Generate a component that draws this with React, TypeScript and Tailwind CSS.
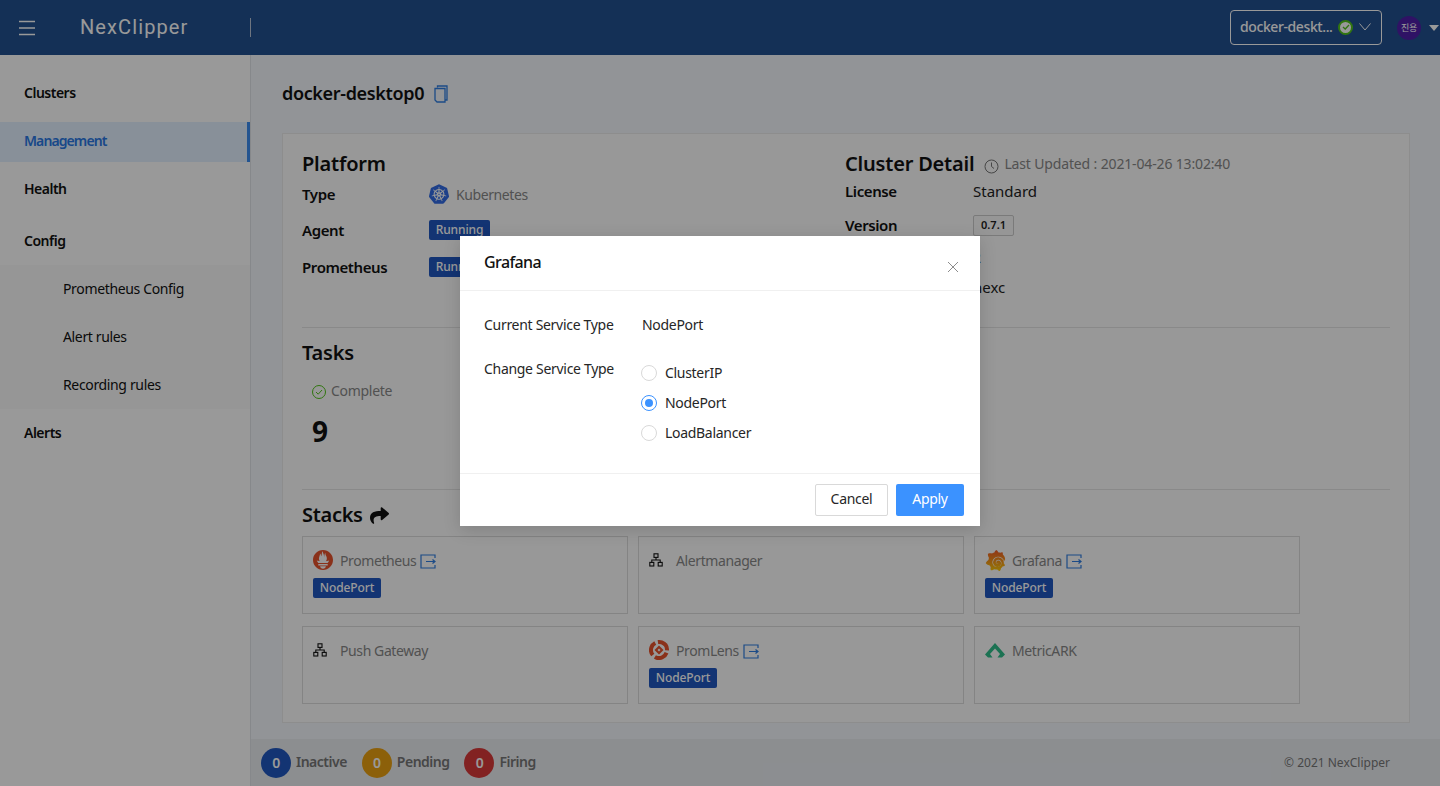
import React from "react";
import { SiKubernetes, SiPrometheus } from "react-icons/si";
import { FaShare } from "react-icons/fa";

const Cluster = () => (
  <svg width="14" height="14" viewBox="0 0 14 14" fill="none" stroke="#111" strokeWidth="1.1">
    <rect x="5" y="0.8" width="4" height="3.6" />
    <rect x="0.8" y="9.4" width="4" height="3.6" />
    <rect x="9.2" y="9.4" width="4" height="3.6" />
    <path d="M7 4.4V7M2.8 9.4V7H11.2V9.4" />
  </svg>
);

const LinkOut = () => (
  <svg width="16" height="15" viewBox="0 0 16 15" fill="none" stroke="#2f7de1" strokeWidth="1.2" className="ml-[4px] mt-[2px] shrink-0">
    <path d="M15 4V1H1V14H15V11" />
    <path d="M6 7.5H15M12.5 5.5L15 7.5L12.5 9.5" />
  </svg>
);

const grafanaPath = "M23.02 10.59a8.578 8.578 0 0 0-.862-3.034 8.911 8.911 0 0 0-1.789-2.445c.337-1.342-.413-2.505-.413-2.505-1.292-.08-2.113.4-2.416.62-.052-.02-.102-.044-.154-.064-.22-.089-.446-.172-.677-.247-.231-.073-.47-.14-.711-.197a9.867 9.867 0 0 0-.875-.161C14.557.753 12.94 0 12.94 0c-1.804 1.145-2.147 2.744-2.147 2.744l-.018.093c-.098.029-.2.057-.298.088-.138.042-.275.094-.413.143-.138.055-.275.107-.41.166a8.869 8.869 0 0 0-1.557.87l-.063-.029c-2.497-.955-4.716.195-4.716.195-.203 2.658.996 4.33 1.235 4.636a11.608 11.608 0 0 0-.607 2.635C1.636 12.677.953 15.014.953 15.014c1.926 2.214 4.171 2.351 4.171 2.351.003-.002.006-.004.006-.006.285.509.615.994.986 1.446.156.19.32.371.488.548-.704 2.009.099 3.68.099 3.68 2.144.08 3.553-.937 3.849-1.173a9.784 9.784 0 0 0 3.164.501h.08l.055-.003.107-.002.103-.005.003.002c1.01 1.44 2.788 1.646 2.788 1.646 1.264-1.332 1.337-2.653 1.337-2.94v-.058c0-.02-.003-.039-.003-.06.265-.187.52-.387.758-.6a7.875 7.875 0 0 0 1.415-1.7c1.43.083 2.437-.885 2.437-.885-.236-1.49-1.085-2.216-1.264-2.354l-.018-.013-.016-.013a.217.217 0 0 1-.031-.02c.008-.092.016-.18.02-.27.011-.162.016-.323.016-.48v-.253l-.005-.098-.008-.135a1.891 1.891 0 0 0-.01-.13c-.003-.042-.008-.083-.013-.125l-.016-.124-.018-.122a6.215 6.215 0 0 0-2.032-3.73 6.015 6.015 0 0 0-3.222-1.46 6.292 6.292 0 0 0-.85-.048l-.107.002h-.063l-.11.007-.124.009c-.04.002-.07.007-.115.013a6.12 6.12 0 0 0-2.64.803 5.956 5.956 0 0 0-1.95 1.806 5.794 5.794 0 0 0-.964 2.374 5.46 5.46 0 0 0-.068.843l.003.153.005.1c.005.157.022.32.037.474a5.102 5.102 0 0 0 1.65 3.15 4.945 4.945 0 0 0 2.67 1.197c.251.028.502.034.74.026l.122-.005.078-.005c.042-.003.084-.005.121-.01l.158-.016.103-.013.102-.018a4.207 4.207 0 0 0 2.34-1.274 3.995 3.995 0 0 0 1.06-2.348c.01-.076.013-.153.018-.228l.003-.06.002-.06.002-.136c0-.047-.002-.098-.005-.148a1.996 1.996 0 0 0-.016-.184 3.34 3.34 0 0 0-1.065-2.064 3.194 3.194 0 0 0-1.84-.81l-.126-.012c-.025 0-.05-.002-.075-.002h-.08l-.09.002c-.04 0-.08.005-.12.008a2.48 2.48 0 0 0-1.22.46 2.29 2.29 0 0 0-.836 1.18 1.62 1.62 0 0 0 .075 1.18c.078.157.176.296.3.41.115.11.255.2.405.254.08.03.16.05.24.062.04.005.08.008.12.01h.154c.022 0 .042-.003.062-.005.02-.003.04-.005.06-.01a.97.97 0 0 0 .44-.2.8.8 0 0 0 .28-.44.66.66 0 0 0-.02-.47.47.47 0 0 0-.34-.24.42.42 0 0 1 .4.24.74.74 0 0 1 .07.52.86.86 0 0 1-.3.48c-.3.25-.73.34-1.12.25a1.55 1.55 0 0 1-.68-.32 1.97 1.97 0 0 1-.51-.62 2.23 2.23 0 0 1-.14-1.64 2.72 2.72 0 0 1 1-1.4 2.93 2.93 0 0 1 1.47-.55c.04-.003.09-.006.14-.008l.1-.003h.1c.04 0 .07.003.1.005a3.7 3.7 0 0 1 2.19.94 3.84 3.84 0 0 1 1.23 2.39c.01.07.02.15.02.22l.01.17v.15l-.003.08-.003.07c-.01.09-.01.18-.02.27a4.5 4.5 0 0 1-1.2 2.65 4.72 4.72 0 0 1-2.63 1.44l-.12.02-.12.02-.17.02c-.05.005-.1.008-.15.01l-.09.01-.13.004c-.27.01-.55 0-.83-.03a5.47 5.47 0 0 1-2.95-1.32 5.62 5.62 0 0 1-1.82-3.47c-.02-.17-.04-.35-.04-.52l-.006-.11-.003-.17c0-.31.03-.62.08-.93a6.32 6.32 0 0 1 1.05-2.58 6.47 6.47 0 0 1 2.12-1.96 6.63 6.63 0 0 1 2.87-.87l.13-.01.14-.01.07-.003h.11c.32-.01.63 0 .93.05a6.53 6.53 0 0 1 3.5 1.59 6.73 6.73 0 0 1 2.2 4.04z";

const Prom = () => <SiPrometheus size={20} color="#e6522c" />;
const Grafana = () => (
  <svg width="21" height="21" viewBox="0 0 24 24">
    <defs>
      <linearGradient id="gf" x1="0" y1="0" x2="0" y2="1">
        <stop offset="0" stopColor="#f05a28" />
        <stop offset="1" stopColor="#fbca0a" />
      </linearGradient>
    </defs>
    <path fill="url(#gf)" d={grafanaPath} />
  </svg>
);

const PromLens = () => (
  <svg width="20" height="20" viewBox="0 0 20 20">
    <circle cx="10" cy="10" r="8" fill="none" stroke="#e6522c" strokeWidth="4" strokeDasharray="14 2.8" transform="rotate(20 10 10)" />
    <path fillRule="evenodd" d="M10 5.5L14.5 10L10 14.5L5.5 10ZM10 8.5L8.5 10L10 11.5L11.5 10Z" fill="#e6522c" />
  </svg>
);

const Ark = () => (
  <svg width="20" height="16" viewBox="0 0 20 16">
    <path d="M10 1L20 12.5L17 15.5H12.5L15 12L10 6.5L5 12L7.5 15.5H3L0 12.5Z" fill="#2fbf8a" />
  </svg>
);

const Tag = ({ children, className = "" }: { children: React.ReactNode; className?: string }) => (
  <span className={`inline-flex items-center justify-center h-[20px] rounded-[2px] bg-[#2058c0] text-white text-[12px] font-medium tracking-[-0.1px] ${className}`}>{children}</span>
);

const StackCard = ({ icon, name, link, tag }: { icon: React.ReactNode; name: string; link?: boolean; tag?: boolean }) => (
  <div className="h-[78px] border border-[#ddd] px-[10px] pt-[13px]">
    <div className="flex items-center h-[20px]">
      <span className="w-[27px] flex items-center shrink-0">{icon}</span>
      <span className="text-[14px] text-[#888] tracking-[-0.4px]">{name}</span>
      {link && <LinkOut />}
    </div>
    {tag && <Tag className="w-[68px] mt-[8px]">NodePort</Tag>}
  </div>
);

const Row = ({ label, children, h, w = "w-[127px]" }: { label: string; children: React.ReactNode; h: string; w?: string }) => (
  <div className={`flex items-center ${h}`}>
    <span className={`${w} text-[15px] font-semibold text-[#111] shrink-0 tracking-[-0.4px]`}>{label}</span>
    {children}
  </div>
);

const Radio = ({ label, checked }: { label: string; checked?: boolean }) => (
  <div className="flex items-center h-[30px]">
    <span className={`w-[16px] h-[16px] rounded-full border bg-white flex items-center justify-center ${checked ? "border-[#3b92ff]" : "border-[#d9d9d9]"}`}>
      {checked && <span className="w-[8px] h-[8px] rounded-full bg-[#3b92ff]" />}
    </span>
    <span className="ml-[8px] text-[14px] text-[#262626] pb-[1px]">{label}</span>
  </div>
);

const Count = ({ color, label, ml }: { color: string; label: string; ml: string }) => (
  <div className={`flex items-center ${ml}`}>
    <span className={`w-[30px] h-[30px] rounded-full ${color} text-white text-[14px] font-semibold flex items-center justify-center pb-[1px]`}>0</span>
    <span className="ml-[5px] pb-[3px] text-[14px] font-semibold text-[#777] tracking-[-0.5px]">{label}</span>
  </div>
);

export default function App() {
  return (
    <div className="relative w-[1440px] h-[786px] overflow-hidden bg-[#f3f7fc] font-['Noto_Sans',sans-serif] tracking-[-0.3px] flex flex-col">
      <header className="h-[55px] shrink-0 bg-[#22508f] flex items-center">
        <svg width="18" height="16" viewBox="0 0 18 16" className="ml-[18px]" stroke="#fff" strokeWidth="1.5">
          <path d="M1 1.5H17M1 8H17M1 14.5H17" />
        </svg>
        <span className="ml-[44px] w-[170px] text-[20px] font-normal tracking-[1.1px] text-white font-['Roboto',sans-serif] pb-[1px]">NexClipper</span>
        <span className="w-px h-[19px] bg-[#b8c4d6]" />
        <div className="ml-auto w-[152px] h-[35px] mt-[-1px] rounded-[4px] border border-white flex items-center pl-[9px]">
          <span className="text-[14px] text-white font-medium tracking-[-0.4px] w-[95px] pb-[1px]">docker-deskt...</span>
          <span className="ml-[3px] w-[15px] h-[15px] rounded-full bg-white border-2 border-[#52c41a] flex items-center justify-center">
            <svg width="8" height="8" viewBox="0 0 8 8" fill="none" stroke="#52c41a" strokeWidth="1.3"><path d="M1 4L3.2 6L7 2" /></svg>
          </span>
          <svg width="12" height="8" viewBox="0 0 12 8" className="ml-[6px]" fill="none" stroke="#fff"><path d="M0.5 0.5L6 7L11.5 0.5" /></svg>
        </div>
        <span className="ml-[15px] w-[24px] h-[24px] rounded-full bg-[#4f1fa8] text-[9px] text-white flex items-center justify-center font-['Noto_Sans_CJK_KR',sans-serif]">진용</span>
        <svg width="10" height="6" viewBox="0 0 10 6" className="ml-[8px] mr-[1px]"><path d="M0 0H10L5 6Z" fill="#fff" /></svg>
      </header>
      <div className="flex flex-1 min-h-0">
        <aside className="w-[251px] shrink-0 bg-white border-r border-[#dfe3e8] pt-[18px] text-[14px] font-semibold text-[#111] tracking-[-0.5px]">
          <div className="h-[40px] pl-[24px] pb-[2px] flex items-center">Clusters</div>
          <div className="mt-[9px] h-[40px] pl-[24px] pb-[3px] flex items-center bg-[#e3f0ff] border-r-[3px] border-[#3b8cf0] text-[#2a78e4] tracking-[-0.9px]">Management</div>
          <div className="mt-[7px] h-[40px] pl-[24px] pb-[2px] flex items-center">Health</div>
          <div className="mt-[12px] h-[40px] pl-[24px] pb-[2px] flex items-center">Config</div>
          <div className="mt-[4px] bg-[#fafafa] h-[144px] font-normal text-[14px] tracking-[-0.35px]">
            <div className="h-[48px] pl-[63px] pb-[2px] flex items-center">Prometheus Config</div>
            <div className="h-[48px] pl-[63px] pb-[2px] flex items-center">Alert rules</div>
            <div className="h-[48px] pl-[63px] pb-[2px] flex items-center">Recording rules</div>
          </div>
          <div className="mt-[4px] h-[40px] pl-[24px] pb-[2px] flex items-center">Alerts</div>
        </aside>
        <main className="flex-1 min-w-0 flex flex-col">
          <div className="flex-1 pl-[31px] pr-[30px]">
            <div className="h-[78px] flex items-center pb-[1px]">
              <span className="text-[18px] font-semibold text-[#111] tracking-[-0.35px]">docker-desktop0</span>
              <svg width="14" height="18" viewBox="0 0 14 18" className="ml-[10px] mt-[1px]" fill="none" stroke="#2f7de1" strokeWidth="1.3">
                <path d="M3.5 2.5V1H13V15H11" />
                <path d="M1 3.5H11V17H3L1 15Z" />
              </svg>
            </div>
            <section className="h-[590px] bg-[#fdfdfd] border border-[#ebebeb] px-[19px] pt-[16px]">
              <div className="flex h-[178px] border-b border-[#e4e4e4]">
                <div className="w-[543px]">
                  <div className="h-[28px] text-[20px] leading-[28px] font-semibold text-[#111] tracking-[-0.2px]">Platform</div>
                  <Row label="Type" h="h-[36px] mt-[-2px]">
                    <SiKubernetes size={20} color="#326ce5" />
                    <span className="ml-[7px] text-[14px] text-[#888] tracking-[-0.4px]">Kubernetes</span>
                  </Row>
                  <Row label="Agent" h="h-[36px]"><Tag className="w-[61px]">Running</Tag></Row>
                  <Row label="Prometheus" h="h-[38px]"><Tag className="w-[61px]">Running</Tag></Row>
                </div>
                <div className="flex-1">
                  <div className="h-[28px] flex items-center">
                    <span className="text-[20px] font-semibold text-[#111] tracking-[-0.2px]">Cluster Detail</span>
                    <svg width="15" height="15" viewBox="0 0 15 15" className="ml-[10px] mt-[4px]" fill="none" stroke="#777"><circle cx="7.5" cy="7.5" r="6.5" /><path d="M7.5 3.5V7.5L10 9.5" /></svg>
                    <span className="ml-[5px] text-[14px] text-[#888] tracking-[-0.15px] pb-[1px]">Last Updated : 2021-04-26 13:02:40</span>
                  </div>
                  <Row label="License" w="w-[128px]" h="h-[28px] mt-[-1px]"><span className="text-[15px] text-[#222] tracking-normal">Standard</span></Row>
                  <Row label="Version" w="w-[128px]" h="h-[40px]">
                    <span className="h-[21px] w-[41px] border border-[#ccc] rounded-[2px] bg-[#fafafa] text-[11px] font-semibold text-[#222] tracking-normal flex items-center justify-center">0.7.1</span>
                  </Row>
                  <Row label="Node" w="w-[128px]" h="h-[24px]"><span className="text-[14px] text-[#222]">2</span></Row>
                  <Row label="Owner" w="w-[128px]" h="h-[36px]"><span className="text-[15px] text-[#222] tracking-normal">nexc</span></Row>
                </div>
              </div>
              <div className="h-[162px] border-b border-[#e4e4e4] pt-[11px]">
                <div className="text-[20px] leading-[28px] font-semibold text-[#111] tracking-[-0.2px]">Tasks</div>
                <div className="ml-[10px] mt-[13px] flex items-center h-[20px]">
                  <svg width="14" height="14" viewBox="0 0 14 14" fill="none" stroke="#52c41a" className="mt-[4px]"><circle cx="7" cy="7" r="6.5" /><path d="M4 7L6.2 9.2L10 5" /></svg>
                  <span className="ml-[5px] text-[14px] text-[#888]">Complete</span>
                </div>
                <div className="ml-[10px] mt-[11px] text-[28px] leading-[40px] font-bold text-[#111]">9</div>
              </div>
              <div className="flex items-center h-[46px] pt-[4px]">
                <span className="text-[20px] font-semibold text-[#111]">Stacks</span>
                <FaShare size={19} color="#111" className="ml-[7px]" />
              </div>
              <div className="grid grid-cols-[326px_326px_326px] gap-x-[10px] gap-y-[12px]">
                <StackCard icon={<Prom />} name="Prometheus" link tag />
                <StackCard icon={<Cluster />} name="Alertmanager" />
                <StackCard icon={<Grafana />} name="Grafana" link tag />
                <StackCard icon={<Cluster />} name="Push Gateway" />
                <StackCard icon={<PromLens />} name="PromLens" link tag />
                <StackCard icon={<Ark />} name="MetricARK" />
              </div>
            </section>
          </div>
          <footer className="h-[47px] shrink-0 bg-[#eaedf1] flex items-center pl-[10px] pr-[50px]">
            <Count color="bg-[#2058c0]" label="Inactive" ml="" />
            <Count color="bg-[#eaa012]" label="Pending" ml="ml-[15px]" />
            <Count color="bg-[#d93a3a]" label="Firing" ml="ml-[15px]" />
            <span className="ml-auto text-[12px] text-[#777] tracking-normal">© 2021 NexClipper</span>
          </footer>
        </main>
      </div>
      <div className="absolute inset-0 bg-black/40 flex justify-center pt-[236px]">
        <div className="w-[520px] h-[290px] bg-white shadow-[0_4px_16px_rgba(0,0,0,0.15)] flex flex-col">
          <div className="h-[55px] border-b border-[#f0f0f0] pl-[24px] pr-[21px] flex justify-between shrink-0">
            <span className="text-[16px] font-medium text-[#111] mt-[14px] tracking-[-0.6px]">Grafana</span>
            <svg width="12" height="12" viewBox="0 0 12 12" className="mt-[25px]" stroke="#8c8c8c" fill="none"><path d="M1 1L11 11M11 1L1 11" /></svg>
          </div>
          <div className="flex-1 pl-[24px] pt-[23px] text-[14px] text-[#262626]">
            <div className="flex">
              <span className="w-[158px]">Current Service Type</span>
              <span>NodePort</span>
            </div>
            <div className="flex mt-[23px]">
              <span className="w-[157px]">Change Service Type</span>
              <div className="mt-[-4px] pt-[4px]">
                <Radio label="ClusterIP" />
                <Radio label="NodePort" checked />
                <Radio label="LoadBalancer" />
              </div>
            </div>
          </div>
          <div className="h-[53px] border-t border-[#f0f0f0] flex items-start justify-end pt-[10px] pr-[16px] gap-[8px] text-[14px] shrink-0">
            <button className="w-[73px] h-[32px] border border-[#d9d9d9] rounded-[2px] bg-white text-[#262626] pb-[3px]">Cancel</button>
            <button className="w-[68px] h-[32px] rounded-[2px] bg-[#3b92ff] text-white pb-[3px]">Apply</button>
          </div>
        </div>
      </div>
    </div>
  );
}
